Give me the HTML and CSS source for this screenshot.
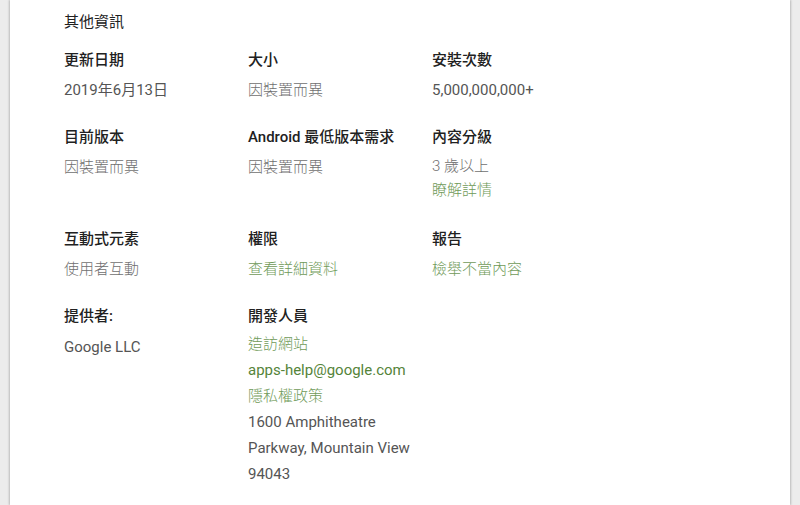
FILE: index.html
```html
<!DOCTYPE html>
<html>

<head>
  <meta charset="utf-8">
  <link rel="stylesheet" href="styles.css">
</head>

<body>

  <div class="card">
    <h2 class="section-title">其他資訊</h2>

    <!-- details grid, three columns -->
    <div class="details">
      <div class="item">
        <div class="label">更新日期</div>
        <div class="value">2019年6月13日</div>
      </div>
      <div class="item">
        <div class="label">大小</div>
        <div class="value muted">因裝置而異</div>
      </div>
      <div class="item">
        <div class="label">安裝次數</div>
        <div class="value">5,000,000,000+</div>
      </div>

      <div class="item">
        <div class="label">目前版本</div>
        <div class="value muted">因裝置而異</div>
      </div>
      <div class="item">
        <div class="label">Android 最低版本需求</div>
        <div class="value muted">因裝置而異</div>
      </div>
      <div class="item">
        <div class="label">內容分級</div>
        <div class="value muted tight">3 歲以上</div>
        <a class="link tight more" href="#">瞭解詳情</a>
      </div>

      <div class="item">
        <div class="label">互動式元素</div>
        <div class="value muted">使用者互動</div>
      </div>
      <div class="item">
        <div class="label">權限</div>
        <a class="value link" href="#">查看詳細資料</a>
      </div>
      <div class="item">
        <div class="label">報告</div>
        <a class="value link" href="#">檢舉不當內容</a>
      </div>

      <div class="item">
        <div class="label">提供者:</div>
        <div class="value offered">Google LLC</div>
      </div>
      <div class="item">
        <div class="label">開發人員</div>
        <div class="dev-list">
          <a class="link" href="#">造訪網站</a>
          <a class="link email" href="#">apps-help@google.com</a>
          <a class="link" href="#">隱私權政策</a>
          <div class="address">1600 Amphitheatre Parkway, Mountain View 94043</div>
        </div>
      </div>
    </div>
  </div>

</body>

</html>
```

FILE: styles.css
```css
body {
  margin: 0;
  background-color: #ececec;
  font-family: Roboto, "Noto Sans CJK TC", sans-serif;
  font-size: 15px;
  height: 505px;
  overflow: hidden;
}

.card {
  margin: 0 10px;
  height: 505px;
  background-color: #fff;
  box-shadow: -1px 0 2px rgba(0, 0, 0, 0.2), 1px 0 2px rgba(0, 0, 0, 0.2);
  padding: 10px 0 0 54px;
  box-sizing: border-box;
}

.section-title {
  margin: 0 0 14px 0;
  font-size: 15px;
  font-weight: 400;
  line-height: 24px;
  color: #212121;
}

.details {
  display: grid;
  grid-template-columns: 184px 184px 184px;
  row-gap: 22px;
}

.item {
  display: flex;
  flex-direction: column;
  align-items: flex-start;
}

.label {
  font-weight: 500;
  line-height: 24px;
  color: #212121;
}

.value {
  margin-top: 5px;
  line-height: 26px;
  color: #555;
}

.muted {
  font-weight: 300;
  color: #6f6f6f;
}

.tight {
  line-height: 24px;
}

.link {
  color: #6f9a58;
  font-weight: 300;
  text-decoration: none;
  line-height: 26px;
}

.link.tight {
  line-height: 24px;
}

.more {
  margin-bottom: 3px;
}

.email {
  font-weight: 400;
  color: #55843a;
}

.offered {
  margin-top: 6px;
}

.dev-list {
  margin-top: 3px;
  display: flex;
  flex-direction: column;
  align-items: flex-start;
}

.address {
  width: 170px;
  line-height: 26px;
  color: #555;
}
```
